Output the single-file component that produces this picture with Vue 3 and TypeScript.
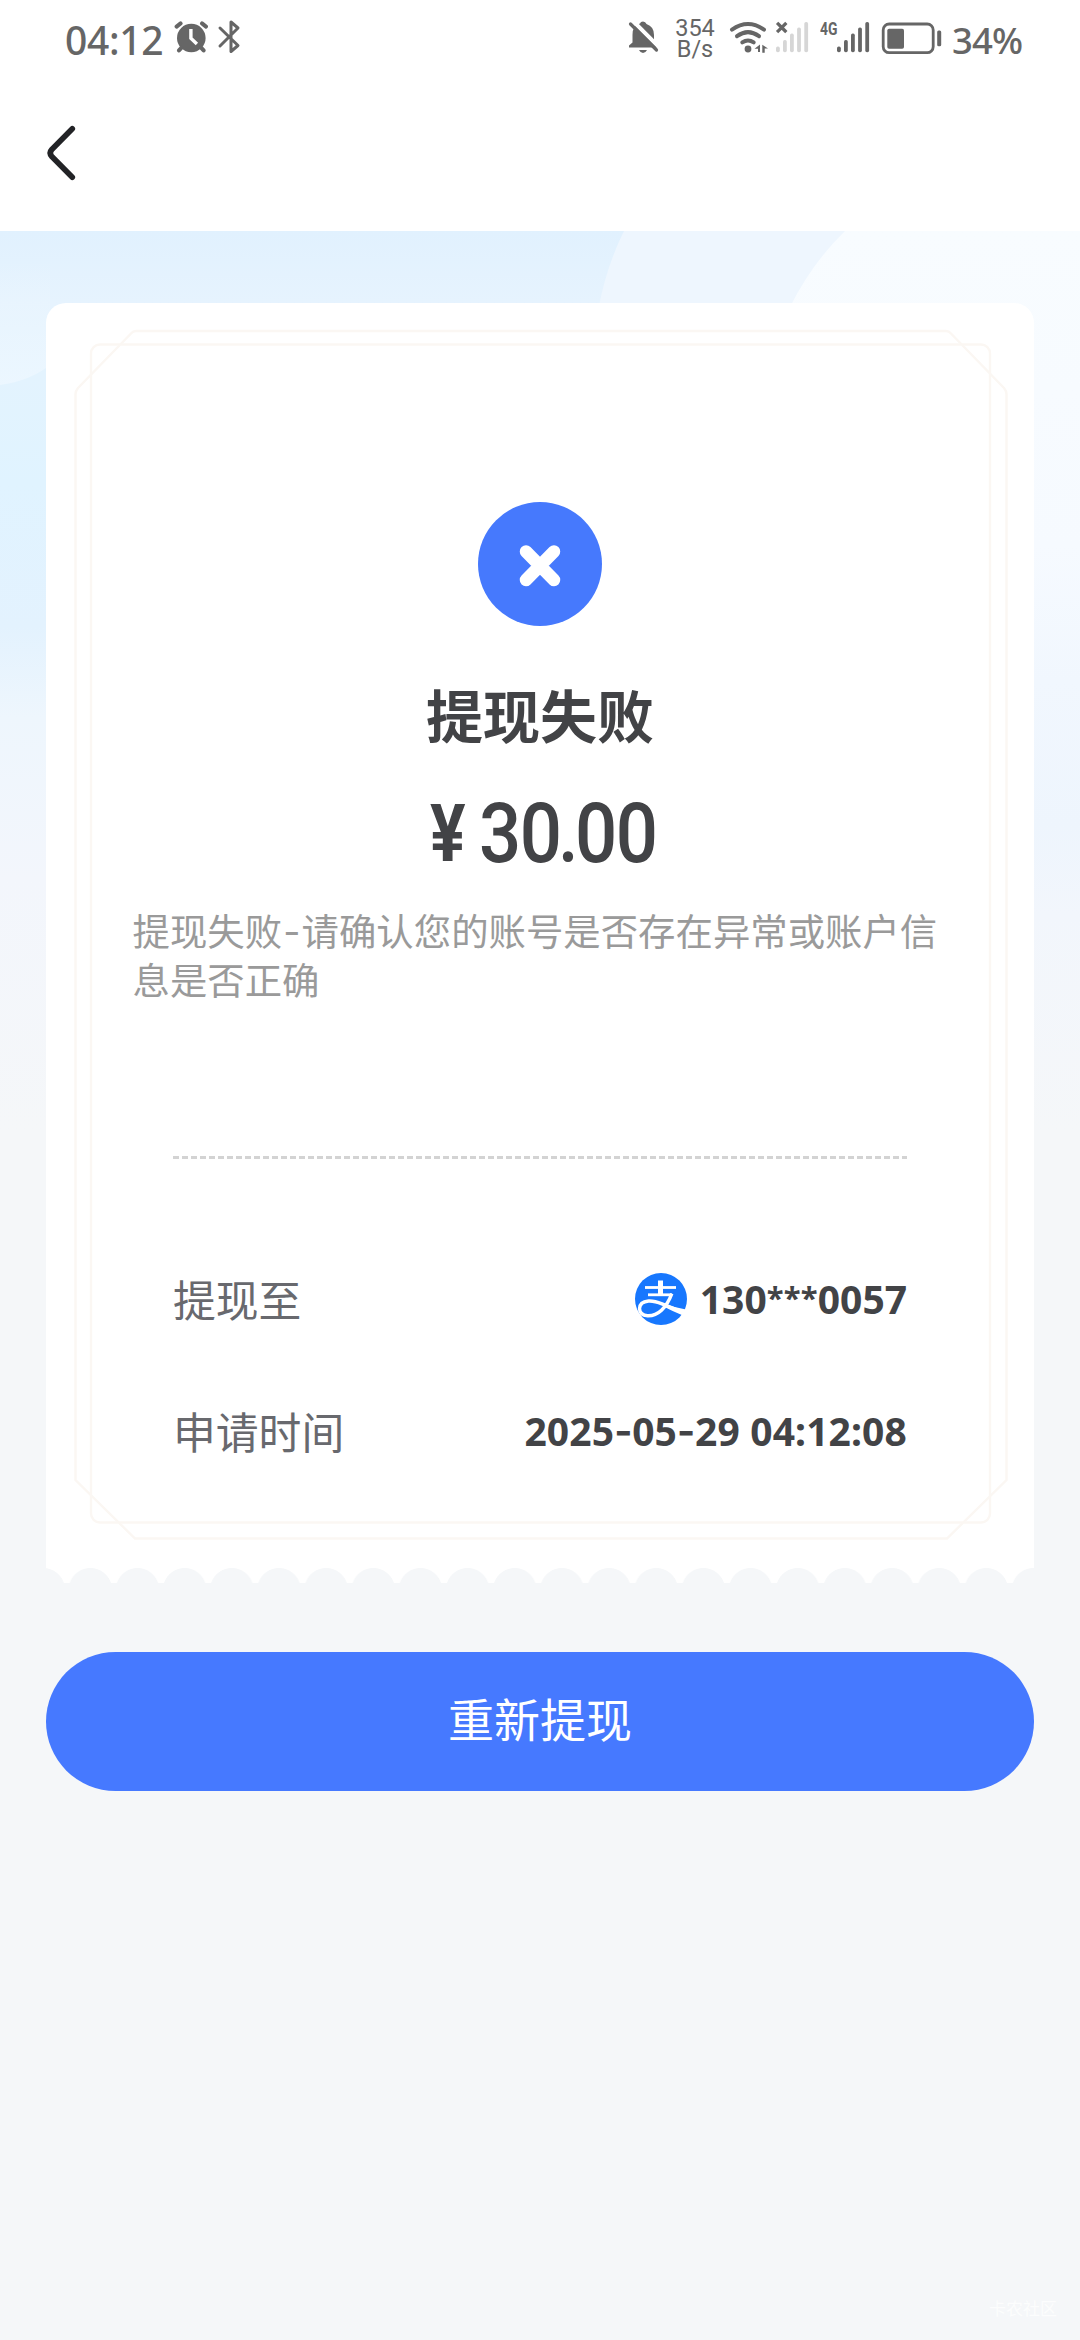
<script setup lang="ts">
interface Bar {
  x: number
  y: number
}

const bars: Bar[] = [
  { x: 0, y: 46.6 },
  { x: 7, y: 40 },
  { x: 14, y: 33.5 },
  { x: 21.1, y: 27.5 },
  { x: 28.3, y: 22 },
]

const result = {
  title: '提现失败',
  yuan: '30',
  cents: '00',
  account: ['130', '***', '0057'],
  date: ['2025', '05', '29'],
  time: '04:12:08',
}
</script>

<template>
  <div class="page">
    <div class="statusbar">
      <span class="clock">04:12</span>
      <svg class="alarm" width="34" height="78" viewBox="174 0 34 78">
        <circle cx="191.3" cy="38" r="14.3" fill="#666" />
        <path d="M176.6 26.6l4-3.2M206 26.6l-4-3.2M181.3 47.8l-2.3 2.6M201.3 47.8l2.3 2.6" stroke="#666" stroke-width="4" stroke-linecap="round" />
        <path d="M190.9 29v9.3l6 5.6" fill="none" stroke="#fff" stroke-width="3.4" />
      </svg>
      <svg class="bluetooth" width="24" height="78" viewBox="217 0 24 78">
        <path d="M220 28l18 17.5l-7 6V22l7 6L220 46" fill="none" stroke="#666" stroke-width="3" stroke-linejoin="round" stroke-linecap="round" />
      </svg>
      <span class="spacer"></span>
      <svg class="bell" width="32" height="78" viewBox="627 0 32 78">
        <path d="M629 47.5V45.5l3.5-3V35q0-10 7.5-11.5Q640.5 21.5 643 21.5T646.500 24Q654 26.5 654 35v7.500l3.500 3v2Z" fill="#666" />
        <path d="M639 50h8q-1.500 3-4 3t-4-3Z" fill="#666" />
        <path d="M632.500 20.500L659 47" stroke="#fff" stroke-width="4" />
        <path d="M630.500 24l26 26" stroke="#666" stroke-width="3.200" stroke-linecap="round" />
      </svg>
      <span class="speed"><span>354</span><span>B/s</span></span>
      <svg class="wifi" width="39" height="78" viewBox="729 0 39 78">
        <g fill="none" stroke="#666" stroke-width="4" stroke-linecap="round">
          <path d="M732 29.600Q748 18.500 764 29.600" />
          <path d="M737 36.200Q748 28 759 36.200" />
          <path d="M742.300 42.400Q748 38.500 753.700 42.400" />
        </g>
        <circle cx="748" cy="49" r="3.400" fill="#666" />
        <path d="M760 44.500v7.500h-2v-3.300h-3.500ZM762.300 52.800v-8l5.700 3.600h-3.300v4.400Z" fill="#666" />
      </svg>
      <svg class="sim" width="34" height="78" viewBox="775 0 34 78">
        <path d="M778.200 24l7 7M785.200 24l-7 7" stroke="#666" stroke-width="3.200" stroke-linecap="square" />
        <rect v-for="b in bars" :key="b.x" :x="b.x + 776" :y="b.y" width="3.800" :height="52.300 - b.y" rx="1.700" fill="#d6d6d6" />
      </svg>
      <span class="net"><span>4G</span></span>
      <svg width="34" height="78" viewBox="836 0 34 78">
        <rect v-for="b in bars" :key="b.x" :x="b.x + 837" :y="b.y" width="3.800" :height="52.300 - b.y" rx="1.700" fill="#666" />
      </svg>
      <svg class="battery" width="62" height="78" viewBox="881 0 62 78">
        <rect x="883.200" y="24" width="50" height="28.700" rx="6" fill="none" stroke="#666" stroke-width="2.800" />
        <rect x="887.300" y="28.700" width="16.700" height="20" rx="1.800" fill="#666" />
        <rect x="937.200" y="30.500" width="4" height="15.700" rx="1.500" fill="#666" />
      </svg>
      <span class="percent">34%</span>
    </div>

    <div class="navbar">
      <svg width="36" height="60" viewBox="44 124 36 60">
        <path d="M72.300 128.800L51.800 149.500Q48.600 153 51.800 156.500L72.300 177.300" fill="none" stroke="#222326" stroke-width="5.600" stroke-linecap="round" stroke-linejoin="round" />
      </svg>
    </div>

    <div class="content">
      <svg class="backdrop" width="1080" height="900" viewBox="0 0 1080 900">
        <defs>
          <linearGradient id="left" x1="0" y1="0" x2="0" y2="1">
            <stop offset="0" stop-color="#e1f1fe" />
            <stop offset=".08" stop-color="#e6f3fe" />
            <stop offset=".16" stop-color="#e3f3fe" />
            <stop offset=".28" stop-color="#e0f3ff" />
            <stop offset=".44" stop-color="#e3f2fe" />
            <stop offset=".54" stop-color="#eef6fd" />
            <stop offset=".72" stop-color="#f3f6fc" />
            <stop offset="1" stop-color="#f5f7f9" />
          </linearGradient>
          <linearGradient id="right" x1="0" y1="0" x2="0" y2="1">
            <stop offset="0" stop-color="#f8fcff" />
            <stop offset=".35" stop-color="#f6faff" />
            <stop offset=".5" stop-color="#f1f7fe" />
            <stop offset=".66" stop-color="#eef5fd" />
            <stop offset=".76" stop-color="#f2f6fc" />
            <stop offset="1" stop-color="#f5f7f9" />
          </linearGradient>
          <linearGradient id="glow" x1="0" y1="0" x2="0" y2="1">
            <stop offset="0" stop-color="#edf7ff" stop-opacity="0" />
            <stop offset="1" stop-color="#edf7ff" stop-opacity=".9" />
          </linearGradient>
        </defs>
        <rect width="1080" height="900" fill="url(#left)" />
        <path d="M0 30H50V134Q30 150 0 154Z" fill="url(#glow)" />
        <path d="M624 0Q606 36 598 80H1080V0Z" fill="#eef6fe" />
        <path d="M845 0Q812 32 790 76H1000V900H1080V0Z" fill="url(#right)" />
      </svg>

      <section class="card">
        <svg class="frame" width="988" height="1265" viewBox="46 303 988 1265" fill="none" stroke="#fbf7f3" stroke-width="2.400">
          <path d="M136 331H946Q949 331 951 333.500L1004 388Q1006.500 391 1006.500 394V1480L947 1538.500H135L75.500 1480V394Q75.500 391 78 388L131 333.500Q133 331 136 331Z" />
          <rect x="91" y="344.500" width="899" height="1178" rx="9" />
        </svg>
        <svg class="mark" width="124" height="124" viewBox="0 0 124 124">
          <circle cx="62" cy="62" r="62" fill="#4679fd" />
          <path d="M48 49.500l28 28.500M76 49.500L48 78" stroke="#fff" stroke-width="12.500" stroke-linecap="round" />
        </svg>
        <h1 class="title">{{ result.title }}</h1>
        <div class="amount"><span class="yen">¥</span><span class="number">{{ result.yuan }}<span class="point">.</span>{{ result.cents }}</span></div>
        <p class="reason">提现失败<span class="dash">-</span>请确认您的账号是否存在异常或账户信息是否正确</p>
        <div class="divider"></div>
        <div class="row">
          <span class="label">提现至</span>
          <span class="value">
            <svg class="alipay" width="52" height="52" viewBox="0 0 52 52">
              <circle cx="26" cy="26" r="26" fill="#1777fe" />
              <g fill="none" stroke="#fff">
                <path d="M25.500 7.500v14" stroke-width="5" />
                <path d="M10 14.500h31" stroke-width="2.800" />
                <path d="M13 21.800h24" stroke-width="2.800" />
                <path d="M36.800 20.600Q33 31 26.500 37.200Q20 43.200 12.500 42.800Q4.800 42.200 4.500 35.700Q4.700 28.800 13.500 28Q19 27.600 27 30.800L50 40" stroke-width="3.400" />
              </g>
              <path d="M29 30.500Q40 34.800 51 36.500L48 42.500Q38 38.500 27.500 33Z" fill="#fff" />
            </svg>
            <span class="digits">{{ result.account[0] }}<span class="stars">{{ result.account[1] }}</span>{{ result.account[2] }}</span>
          </span>
        </div>
        <div class="row">
          <span class="label">申请时间</span>
          <span class="digits date"><template v-for="(part, i) in result.date" :key="i"><span v-if="i > 0" class="hy">-</span>{{ part }}</template> {{ result.time }}</span>
        </div>
      </section>
      <div class="scallop"></div>
      <button class="retry" type="button">重新提现</button>
      <span class="watermark">卡农社区</span>
    </div>
  </div>
</template>

<style>
body {
  margin: 0;
}
</style>

<style scoped>
.page {
  width: 1080px;
  height: 2340px;
  display: flex;
  flex-direction: column;
  overflow: hidden;
  background: #fff;
  font-family: "Noto Sans", "Noto Sans CJK SC", sans-serif;
}
.statusbar {
  height: 78px;
  display: flex;
  flex: none;
  align-items: center;
  color: #666;
  padding-left: 65px;
  box-sizing: border-box;
}
.statusbar svg {
  flex: none;
}
.statusbar > span {
  flex: none;
  white-space: nowrap;
}
.clock {
  width: 109px;
  font-size: 39px;
  font-weight: 500;
  letter-spacing: -0.300px;
  line-height: 80px;
  height: 78px;
}
.bluetooth {
  margin-left: 9px;
}
.statusbar > .spacer {
  width: 386px;
}
.speed {
  width: 42px;
  margin-left: 15px;
  display: flex;
  flex-direction: column;
  align-items: center;
  font-family: Roboto, sans-serif;
  font-size: 23.500px;
  line-height: 21px;
}
.wifi {
  margin-left: 13px;
}
.sim {
  margin-left: 7px;
}
.net {
  width: 16px;
  margin-left: 11px;
  height: 78px;
  font-family: Roboto, sans-serif;
  font-weight: 700;
  font-size: 19px;
  line-height: 58px;
}
.net span {
  display: inline-block;
  transform: scaleX(0.730);
  transform-origin: 0 50%;
}
.battery {
  margin-left: 11px;
}
.percent {
  width: 72px;
  margin-left: 9px;
  font-size: 36.500px;
  font-weight: 500;
  letter-spacing: -0.900px;
  line-height: 80px;
  height: 78px;
}
.navbar {
  height: 153px;
  flex: none;
  display: flex;
  align-items: center;
  padding: 0 0 1px 44px;
  box-sizing: border-box;
}
.content {
  position: relative;
  flex: 1;
  display: flex;
  flex-direction: column;
  align-items: center;
  padding-top: 72px;
  background: #f5f7f9;
}
.backdrop {
  position: absolute;
  left: 0;
  top: 0;
}
.card {
  position: relative;
  width: 988px;
  height: 1265px;
  box-sizing: border-box;
  padding-top: 199px;
  background: #fff;
  border-radius: 20px 20px 0 0;
  display: flex;
  flex-direction: column;
  align-items: center;
}
.frame {
  position: absolute;
  left: 0;
  top: 0;
}
.mark {
  flex: none;
}
.title {
  margin: 45px 0 0;
  font-size: 57px;
  line-height: 84px;
  font-weight: 700;
  color: #424346;
  font-family: "Noto Sans CJK SC", sans-serif;
}
.amount {
  height: 110px;
  margin-top: 24px;
  width: 220px;
  display: flex;
  color: #424346;
  font-family: Roboto, sans-serif;
  font-weight: 500;
  line-height: 110px;
  white-space: nowrap;
}
.yen {
  flex: none;
  width: 49px;
  font-size: 79px;
  font-weight: 700;
  transform: scaleX(0.840);
  transform-origin: 0 50%;
}
.number {
  flex: none;
  font-size: 84px;
  letter-spacing: -1.800px;
  transform: scaleX(0.885);
  transform-origin: 0 50%;
}
.point {
  margin: 0 -2.500px 0 -2.500px;
}
.reason {
  width: 815px;
  margin: 17px 0 0;
  font-family: "Noto Sans CJK SC", sans-serif;
  font-size: 37.400px;
  line-height: 49px;
  color: #9a9a9a;
}
.dash {
  display: inline-block;
  width: 19.500px;
  text-align: center;
  font-family: Inter, sans-serif;
  line-height: 1;
  vertical-align: 1px;
}
.divider {
  width: 734px;
  height: 3px;
  margin-top: 152px;
  background: repeating-linear-gradient(90deg, #d3d3d3 0 6px, transparent 6px 9px);
}
.row {
  width: 734px;
  height: 132px;
  display: flex;
  align-items: center;
  justify-content: space-between;
}
.divider + .row {
  margin-top: 74px;
}
.label {
  font-family: "Noto Sans CJK SC", sans-serif;
  font-size: 42.800px;
  line-height: 64px;
  padding-bottom: 3px;
  color: #68696e;
}
.value {
  display: flex;
  align-items: center;
  gap: 13px;
}
.digits {
  font-size: 39px;
  line-height: 54px;
  font-weight: 700;
  color: #424346;
  white-space: nowrap;
}
.stars {
  font-size: 31px;
  line-height: 1;
  vertical-align: 5px;
  letter-spacing: 0.200px;
}
.date {
  letter-spacing: 0.130px;
}
.hy {
  display: inline-block;
  width: 18px;
  text-align: center;
  font-family: Inter, sans-serif;
  line-height: 1;
  vertical-align: 1px;
}
.scallop {
  position: relative;
  flex: none;
  width: 988px;
  height: 15px;
  background-image: radial-gradient(circle at 50% 21.700px, transparent 21.300px, #fff 22px);
  background-size: 47.170px 15px;
  background-position: -26.400px 0;
}
.retry {
  position: relative;
  flex: none;
  width: 988px;
  height: 139px;
  margin-top: 69px;
  padding: 0 0 8px;
  border: 0;
  border-radius: 70px;
  background: #4679ff;
  color: #fff;
  font-family: "Noto Sans CJK SC", sans-serif;
  font-size: 46px;
  line-height: 131px;
}
.watermark {
  position: absolute;
  right: 23px;
  bottom: 18px;
  font-size: 17px;
  line-height: 26px;
  color: #fcfdfd;
}
</style>
